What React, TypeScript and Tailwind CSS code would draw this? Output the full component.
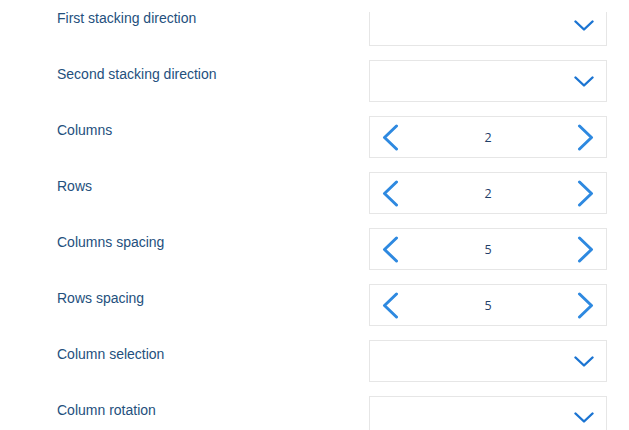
const rows: { label: string; kind: "select" | "stepper"; value?: number }[] = [
  { label: "First stacking direction", kind: "select" },
  { label: "Second stacking direction", kind: "select" },
  { label: "Columns", kind: "stepper", value: 2 },
  { label: "Rows", kind: "stepper", value: 2 },
  { label: "Columns spacing", kind: "stepper", value: 5 },
  { label: "Rows spacing", kind: "stepper", value: 5 },
  { label: "Column selection", kind: "select" },
  { label: "Column rotation", kind: "select" },
];

function ChevronDown() {
  return (
    <svg width="20" height="11" viewBox="0 0 20 11" fill="none">
      <polyline
        points="1.5,1.5 10,9.5 18.5,1.5"
        stroke="#1b74d2"
        strokeWidth="2.4"
        strokeLinecap="round"
        strokeLinejoin="round"
      />
    </svg>
  );
}

function ChevronSide({ dir }: { dir: "left" | "right" }) {
  return (
    <svg width="17" height="27" viewBox="0 0 17 27" fill="none">
      <polyline
        points={dir === "left" ? "14.5,2 2.5,13.5 14.5,25" : "2.5,2 14.5,13.5 2.5,25"}
        stroke="#2e89e0"
        strokeWidth="3"
        strokeLinecap="round"
        strokeLinejoin="round"
      />
    </svg>
  );
}

function Field({ kind, value }: { kind: "select" | "stepper"; value?: number }) {
  if (kind === "select") {
    return (
      <div className="h-[42px] w-[238px] border border-[#e6e6e6] bg-white flex items-center justify-end pr-[12px]">
        <ChevronDown />
      </div>
    );
  }
  return (
    <div className="h-[42px] w-[238px] border border-[#e6e6e6] bg-white flex items-center justify-between px-[12px]">
      <ChevronSide dir="left" />
      <span className="pt-[3px] text-[12.5px] text-[#1f4068] font-['Open_Sans',sans-serif]">{value}</span>
      <ChevronSide dir="right" />
    </div>
  );
}

export default function App() {
  return (
    <div className="w-[629px] h-[430px] overflow-hidden bg-white font-['Liberation_Sans',Arial,sans-serif]">
      <div className="flex flex-col gap-[14px] pt-[4px] pl-[57px] pr-[22px]">
        {rows.map((row, i) => (
          <div key={row.label} className="flex h-[42px]">
            <div className="flex-1 pt-[6px] text-[14px] leading-[16px] text-[#24507d]">
              {row.label}
            </div>
            {i === 0 ? (
              <div className="mt-[8px] h-[34px] overflow-hidden">
                <div className="-mt-[8px]">
                  <Field kind={row.kind} value={row.value} />
                </div>
              </div>
            ) : (
              <Field kind={row.kind} value={row.value} />
            )}
          </div>
        ))}
      </div>
    </div>
  );
}
